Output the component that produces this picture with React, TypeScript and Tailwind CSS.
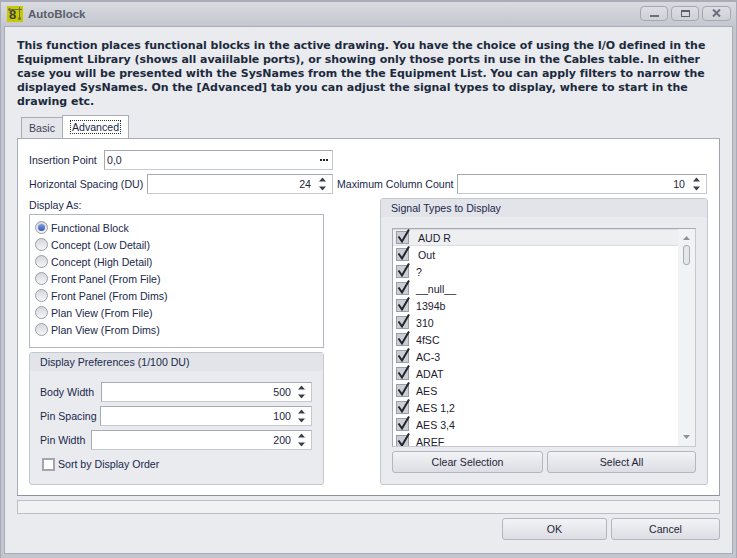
const textColor = "text-[#20284a]";

function Spin() {
  return (
    <svg width="9" height="16" viewBox="0 0 9 16" className="shrink-0">
      <path d="M4.5 1.5 L8 5.5 H1 Z" fill="#3c3f4a" />
      <path d="M1 10.5 H8 L4.5 14.5 Z" fill="#3c3f4a" />
    </svg>
  );
}

function SpinInput({ value, width, pr }: { value: string; width: string; pr: string }) {
  return (
    <div className={`${width} h-[20px] bg-white border border-[#a6a9b6] border-b-[#c6c8d0] border-r-[#c6c8d0] flex items-center justify-end shrink-0 pr-[5px] text-[#23283f]`}>
      <span className={pr}>{value}</span>
      <Spin />
    </div>
  );
}

function Btn({ label, width, h }: { label: string; width: string; h: string }) {
  return (
    <div className={`${width} ${h} rounded-[3px] border border-[#b3b6bf] bg-gradient-to-b from-[#f2f3f5] to-[#dcdee4] flex items-center justify-center text-[#1f2438] shrink-0`}>
      {label}
    </div>
  );
}

function Radio({ label, on }: { label: string; on?: boolean }) {
  return (
    <div className="h-[17px] flex items-center">
      <div className="w-[13px] h-[13px] rounded-full border border-[#9b9eaa] bg-gradient-to-b from-[#d4d6dc] to-[#f6f6f8] flex items-center justify-center shrink-0">
        {on && <div className="w-[7px] h-[7px] rounded-full bg-gradient-to-b from-[#7f9be0] to-[#3a58b8]" />}
      </div>
      <span className={`ml-[3px] ${textColor}`}>{label}</span>
    </div>
  );
}

function Check({ label, indent, selected }: { label: string; indent: string; selected?: boolean }) {
  return (
    <div className={`h-[17px] flex items-center shrink-0 pl-[3px] ${selected ? "bg-[#eeeff1] border-y border-[#dcdde1]" : ""}`}>
      <div className="relative w-[13px] h-[13px] bg-[#ccced6] border border-[#9a9da9] shrink-0">
        <svg width="17" height="17" viewBox="0 0 17 17" className="absolute left-[-1px] top-[-5px]">
          <path d="M2.5 9.5 L6 14.5 L13 2.5" fill="none" stroke="#23252c" strokeWidth="2" />
        </svg>
      </div>
      <span className={`${indent} text-[#1c2030]`}>{label}</span>
    </div>
  );
}

const signals: [string, string][] = [
  ["AUD R", "ml-[9px]"],
  ["Out", "ml-[9px]"],
  ["?", "ml-[7px]"],
  ["__null__", "ml-[7px]"],
  ["1394b", "ml-[7px]"],
  ["310", "ml-[7px]"],
  ["4fSC", "ml-[7px]"],
  ["AC-3", "ml-[7px]"],
  ["ADAT", "ml-[7px]"],
  ["AES", "ml-[7px]"],
  ["AES 1,2", "ml-[7px]"],
  ["AES 3,4", "ml-[7px]"],
  ["AREF", "ml-[7px]"],
];

export default function App() {
  return (
    <div
      className="w-[737px] h-[558px] bg-[#c3c6cf] border-t-2 border-x border-[#a9acb7] flex flex-col overflow-hidden text-[10.6px] leading-[14px]"
      style={{ fontFamily: '"Liberation Sans", "DejaVu Sans", sans-serif' }}
    >
      {/* Title bar */}
      <div className="h-[24px] shrink-0 flex items-center bg-gradient-to-b from-[#d9dbe0] to-[#c4c7cf]">
        <div className="ml-[6px] w-[16px] h-[16px] bg-[#c6c800] relative flex items-end">
          <svg width="16" height="16" viewBox="0 0 16 16" className="absolute left-0 top-0">
            <path d="M3 3.5 H15 M12.5 1 V12" stroke="#6d6d48" strokeWidth="1" fill="none" />
            <circle cx="2.5" cy="3.5" r="1.5" fill="#6d6d48" />
            <circle cx="12.5" cy="12.5" r="1.5" fill="#6d6d48" />
          </svg>
          <span className="relative text-[#3f3f3f] text-[13px] leading-[12px] font-bold ml-[2px] mb-[1px]">8</span>
        </div>
        <span className="ml-[5px] text-[#595d6c] font-bold text-[11.5px]">AutoBlock</span>
        <div className="ml-auto mr-[5px] flex gap-[3px] mt-[-2px]">
          <div className="w-[28px] h-[15px] rounded-[4px] border border-[#a5a8b3] bg-gradient-to-b from-[#dcdee3] to-[#cfd1d8] flex items-end justify-center pb-[3px]">
            <div className="w-[9px] h-[2px] bg-[#6b6e7a]" />
          </div>
          <div className="w-[28px] h-[15px] rounded-[4px] border border-[#a5a8b3] bg-gradient-to-b from-[#dcdee3] to-[#cfd1d8] flex items-center justify-center">
            <div className="w-[9px] h-[7px] border border-t-2 border-[#5c5f6b]" />
          </div>
          <div className="w-[29px] h-[15px] rounded-[4px] border border-[#a5a8b3] bg-gradient-to-b from-[#dcdee3] to-[#cfd1d8] flex items-center justify-center">
            <svg width="9" height="8" viewBox="0 0 9 8">
              <path d="M1 0.5 L8 7.5 M8 0.5 L1 7.5" stroke="#6b6e7a" strokeWidth="2" />
            </svg>
          </div>
        </div>
      </div>

      {/* Client area */}
      <div className="ml-[3px] mr-[3px] mb-[4px] flex-1 min-h-0 bg-[#e9ebef] border border-[#a9acb7] pl-[12px] pr-[12px] flex flex-col">
        <p
          className="mt-[12px] h-[70px] font-bold text-[11px] leading-[14px] tracking-[-0.03px] text-[#1c2a3c] whitespace-nowrap"
          style={{ fontFamily: '"DejaVu Sans", sans-serif' }}
        >
          This function places functional blocks in the active drawing. You have the choice of using the I/O defined in the
          <br />
          <span className="tracking-[-0.065px]">Equipment Library (shows all avaiilable ports), or showing only those ports in use in the Cables table. In either</span>
          <br />
          case you will be presented with the SysNames from the the Equipment List. You can apply filters to narrow the
          <br />
          displayed SysNames. On the [Advanced] tab you can adjust the signal types to display, where to start in the
          <br />
          drawing etc.
        </p>

        {/* Tabs */}
        <div className="mt-[7px] h-[22px] flex items-end pl-[4px] relative z-10">
          <div className="w-[41px] h-[21px] border border-r-0 border-b-0 border-[#a9acb7] bg-[#e4e6ea] flex items-center justify-center text-[#3d4256]">
            Basic
          </div>
          <div className="w-[67px] h-[23px] border border-b-0 border-[#a9acb7] bg-white flex items-center justify-center">
            <span className="border border-dotted border-[#333] px-[1px] leading-[12px] text-[#20284a]">Advanced</span>
          </div>
        </div>

        {/* Panel */}
        <div className="h-[358px] bg-white border border-[#a9acb7] border-r-[#9fa2ad] border-b-[#8f929d] pl-[11px] pr-[12px] pt-[11px] flex flex-col shrink-0">
          <div className="flex items-center h-[20px]">
            <span className={`${textColor} w-[75px] whitespace-nowrap`}>Insertion Point</span>
            <div className="w-[229px] h-[20px] bg-white border border-[#a6a9b6] border-b-[#c6c8d0] border-r-[#c6c8d0] flex items-center pl-[2px] pr-[4px] text-[#23283f]">
              <span>0,0</span>
              <span className="ml-auto flex gap-[1px]">
                <i className="w-[2px] h-[2px] bg-[#222]" />
                <i className="w-[2px] h-[2px] bg-[#222]" />
                <i className="w-[2px] h-[2px] bg-[#222]" />
              </span>
            </div>
          </div>
          <div className="flex items-center h-[20px] mt-[4px]">
            <span className={`${textColor} w-[118px] whitespace-nowrap`}>Horizontal Spacing (DU)</span>
            <SpinInput value="24" width="w-[186px]" pr="mr-[7px]" />
            <span className={`${textColor} ml-[4px] w-[120px] whitespace-nowrap`}>Maximum Column Count</span>
            <SpinInput value="10" width="w-[250px]" pr="mr-[7px]" />
          </div>

          <div className="flex mt-[4px] flex-1 min-h-0">
            {/* Left column */}
            <div className="w-[295px] shrink-0 flex flex-col">
              <div className={`${textColor} h-[14px]`}>Display As:</div>
              <div className="mt-[2px] h-[134px] border border-[#b4b7c2] pt-[4px] pl-[5px]">
                <Radio label="Functional Block" on />
                <Radio label="Concept (Low Detail)" />
                <Radio label="Concept (High Detail)" />
                <Radio label="Front Panel (From File)" />
                <Radio label="Front Panel (From Dims)" />
                <Radio label="Plan View (From File)" />
                <Radio label="Plan View (From Dims)" />
              </div>
              <div className="mt-[4px] h-[133px] rounded-[3px] border border-[#c6c8d0] bg-[#e9ebef] flex flex-col">
                <div className={`h-[18px] bg-[#e2e4e9] pl-[10px] flex items-center ${textColor}`}>Display Preferences (1/100 DU)</div>
                <div className="pl-[10px] pr-[11px] pt-[11px] flex flex-col gap-[4px]">
                  <div className="flex items-center justify-between">
                    <span className={textColor}>Body Width</span>
                    <SpinInput value="500" width="w-[211px]" pr="mr-[6px]" />
                  </div>
                  <div className="flex items-center justify-between">
                    <span className={textColor}>Pin Spacing</span>
                    <SpinInput value="100" width="w-[212px]" pr="mr-[6px]" />
                  </div>
                  <div className="flex items-center justify-between">
                    <span className={textColor}>Pin Width</span>
                    <SpinInput value="200" width="w-[221px]" pr="mr-[6px]" />
                  </div>
                  <div className="flex items-center mt-[3px] pl-[2px]">
                    <div className="w-[13px] h-[13px] border-2 border-[#a3a6b2] bg-white shrink-0" />
                    <span className={`ml-[3px] ${textColor}`}>Sort by Display Order</span>
                  </div>
                </div>
              </div>
            </div>

            {/* Right column */}
            <div className="ml-[56px] w-[328px] h-[287px] rounded-[3px] border border-[#c6c8d0] bg-[#e9ebef] flex flex-col shrink-0">
              <div className={`h-[18px] bg-[#e2e4e9] pl-[10px] flex items-center ${textColor}`}>Signal Types to Display</div>
              <div className="px-[11px] pt-[11px] flex flex-col">
                <div className="h-[219px] bg-white border border-[#a6a9b6] border-b-[#c6c8d0] border-r-[#c6c8d0] flex overflow-hidden">
                  <div className="flex-1 flex flex-col overflow-hidden">
                    {signals.map(([s, ind], i) => (
                      <Check key={s} label={s} indent={ind} selected={i === 0} />
                    ))}
                  </div>
                  <div className="w-[17px] bg-[#f1f2f4] flex flex-col items-center shrink-0">
                    <svg width="7" height="4" viewBox="0 0 7 4" className="mt-[7px]">
                      <path d="M3.5 0 L7 4 H0 Z" fill="#8d909b" />
                    </svg>
                    <div className="mt-[5px] w-[7px] h-[20px] rounded-[3px] border border-[#a9acb7] bg-[#e4e6ea]" />
                    <svg width="7" height="4" viewBox="0 0 7 4" className="mt-auto mb-[7px]">
                      <path d="M0 0 H7 L3.5 4 Z" fill="#8d909b" />
                    </svg>
                  </div>
                </div>
                <div className="mt-[4px] flex justify-between">
                  <Btn label="Clear Selection" width="w-[151px]" h="h-[22px]" />
                  <Btn label="Select All" width="w-[149px]" h="h-[22px]" />
                </div>
              </div>
            </div>
          </div>
        </div>

        {/* Progress */}
        <div className="mt-[4px] h-[14px] bg-[#f1f2f4] border border-[#bcbfc8] shrink-0" />

        {/* Footer */}
        <div className="mt-[4px] flex justify-end gap-[4px]">
          <Btn label="OK" width="w-[105px]" h="h-[22px]" />
          <Btn label="Cancel" width="w-[109px]" h="h-[22px]" />
        </div>
      </div>
    </div>
  );
}
